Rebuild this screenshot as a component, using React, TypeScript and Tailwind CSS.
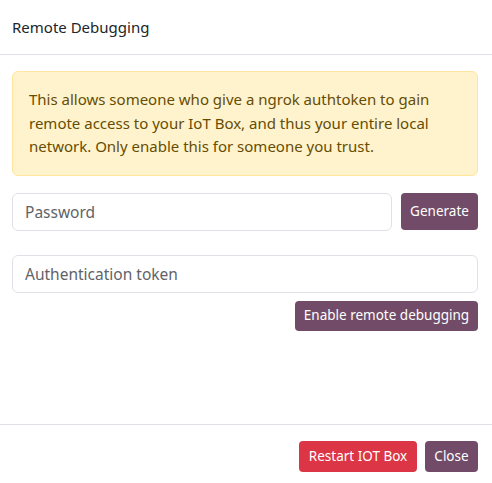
export default function App() {
  return (
    <div className="flex flex-col h-[483px] w-[492px] bg-white text-[#212529] font-['Noto_Sans',sans-serif]">
      {/* Header */}
      <div className="h-[55px] flex items-center pl-3 pr-[14px] border-b border-[#dee2e6]">
        <h4 className="text-[15px] leading-6">Remote Debugging</h4>
      </div>

      {/* Body */}
      <div className="flex-1 pl-3 pr-[14px] pt-4">
        <div className="rounded-md border border-[#ffe69c] bg-[#fff3cd] text-[#664d03] px-4 py-[16px] text-[15px] leading-[23.5px]">
          This allows someone who give a ngrok authtoken to gain remote access to your IoT Box, and thus your entire local network. Only enable this for someone you trust.
        </div>

        <div className="flex gap-[9px] mt-[17px]">
          <input
            className="flex-1 h-[38px] rounded-md border border-[#dee2e6] px-3 text-[15.5px] placeholder:text-[#5f6368] outline-none"
            placeholder="Password"
          />
          <button className="h-[37px] w-[77px] rounded-[4px] bg-[#714b67] text-white text-[13.5px]">
            Generate
          </button>
        </div>

        <input
          className="mt-6 w-full h-[38px] rounded-md border border-[#dee2e6] px-3 text-[15.5px] placeholder:text-[#5f6368] outline-none"
          placeholder="Authentication token"
        />
        <div className="flex justify-end mt-2">
          <button className="h-[30px] w-[183px] rounded-[4px] bg-[#714b67] text-white text-[13.5px]">
            Enable remote debugging
          </button>
        </div>
      </div>

      {/* Footer */}
      <div className="border-t border-[#dee2e6] flex justify-end gap-2 pl-3 pr-[14px] pt-4 pb-[11px]">
        <button className="h-[31px] w-[118px] rounded-[4px] bg-[#dc3545] text-white text-[13.5px]">
          Restart IOT Box
        </button>
        <button className="h-[31px] w-[53px] rounded-[4px] bg-[#714b67] text-white text-[13.5px]">
          Close
        </button>
      </div>
    </div>
  );
}
